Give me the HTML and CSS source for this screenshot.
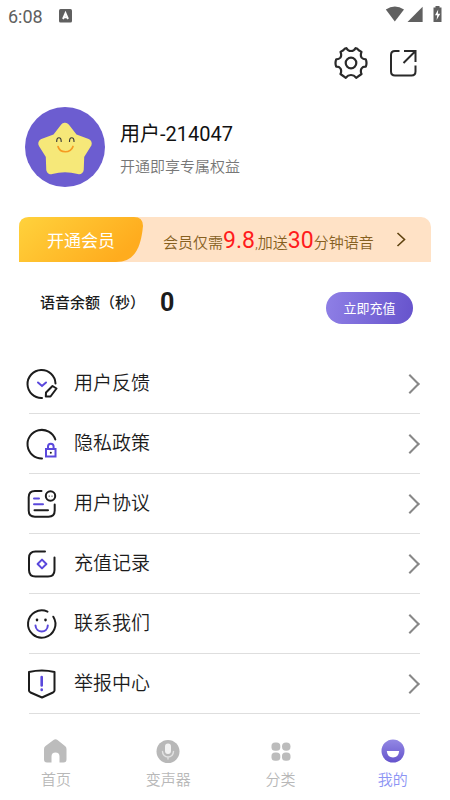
FILE: index.html
```html
<!DOCTYPE html>
<html lang="zh-CN">
<head>
<meta charset="utf-8">
<meta name="viewport" content="width=device-width, initial-scale=1">
<title>我的</title>
<link rel="stylesheet" href="styles.css">
</head>
<body>
<div class="app">
  <div class="status">
    <span class="clock">6:08</span>
    <svg class="badge-a" width="13" height="14" viewBox="0 0 13 14"><rect width="13" height="13.500" rx="1.500" fill="#606060"/><path d="M4 10 6.500 4.200 9 10M5 8.200h3" fill="none" stroke="#fff" stroke-width="1.900"/></svg>
    <svg class="signals" width="58" height="18" viewBox="0 0 58 18"><g fill="#606060"><path d="M.8 4.500Q9.800-1.500 19 4.500L9.800 16.500Z"/><path d="M37.600 1.800V17H22.500Z"/><path d="M48.500 2.500h2V1h4v1.500h2V17h-8Z"/></g><path d="M53.200 4.500 50 10.200h2.200L51.600 15l3.700-6.200h-2.400Z" fill="#fff"/></svg>
  </div>

  <div class="toolbar">
    <button class="icon-button" aria-label="设置">
      <svg width="34" height="34" viewBox="0 0 34 34" fill="none" stroke="#2a2a2a" stroke-width="2.200" stroke-linejoin="round"><circle cx="17" cy="17" r="5.300"/><path d="M9.300 4.300Q10.500 2.200 12.500 2.200Q14 5 17 5Q20 5 21.500 2.200Q23.500 2.200 24.700 4.300L27.500 5.900Q26.100 9.400 27.600 11.600Q29 13.300 31.800 13.300Q33.200 17 31.800 20.700Q28.700 20.600 27.500 22.500Q26.200 25 27.500 28L22.200 31.800Q20 29 17 29Q14 29 11.800 31.800L6.500 28Q7.800 25 6.500 22.500Q5.200 20.600 2.200 20.700Q.8 17 2.200 13.300Q5 13.300 6.400 11.600Q7.900 9.400 6.500 5.900Z"/></svg>
    </button>
    <button class="icon-button" aria-label="分享">
      <svg width="30" height="30" viewBox="0 0 30 30" fill="none" stroke="#2a2a2a" stroke-width="2"><path d="M11.500 3H7Q3 3 3 7V23.500Q3 27.500 7 27.500H23.500Q27.500 27.500 27.500 23.500V17.500M16 3H27.500V14M27.500 3 15.500 15"/></svg>
    </button>
  </div>

  <div class="profile">
    <svg class="avatar" width="80" height="80" viewBox="0 0 80 80"><circle cx="40" cy="40" r="40" fill="#6c5dd0"/><path d="M40 20.500 48.500 31.500 62 36.500 54.500 48.500 54 62.500Q40 58.500 26 62.500L25.500 48.500 18 36.500 31.500 31.500Z" fill="#f6e879" stroke="#f6e879" stroke-width="9.500" stroke-linejoin="round"/><g fill="none" stroke-linecap="round"><path d="M31.700 34.500c0-5 4.500-5 4.500 0M44.500 34.500c0-5 4.500-5 4.500 0" stroke="#3c3c38" stroke-width="1.200"/><path d="M33 39.500C35 46.500 45.500 46.500 48 39.500" stroke="#f59a22" stroke-width="1.700"/></g></svg>
    <div>
      <h1 class="name">用户-214047</h1>
      <p class="tagline">开通即享专属权益</p>
    </div>
  </div>

  <a class="banner" href="#vip">
    <span class="ribbon">
      <svg class="ribbon-shape" viewBox="0 0 124 45" preserveAspectRatio="none"><defs><linearGradient id="gold" x1="0" y1="0" x2="1" y2=".4"><stop offset="0" stop-color="#ffd23c"/><stop offset="1" stop-color="#ffac1e"/></linearGradient></defs><path d="M0 45V10Q0 0 10 0H115Q124 0 124 9C122 30 116 45 97 45Z" fill="url(#gold)"/></svg>
      <span class="ribbon-text">开通会员</span>
    </span>
    <span class="offer">会员仅需<b>9.8</b>,加送<b>30</b>分钟语音</span>
    <svg class="banner-arrow" width="10" height="16" viewBox="0 0 10 16" fill="none" stroke="#5f4310" stroke-width="1.600"><path d="M1.500 1 8.500 7.500 1.500 14"/></svg>
  </a>

  <div class="balance">
    <span class="balance-label">语音余额（秒）</span>
    <strong class="balance-value">0</strong>
    <button class="recharge">立即充值</button>
  </div>

  <ul class="menu">
    <li><a href="#feedback">
      <svg width="34" height="34" viewBox="0 0 34 34" fill="none" stroke="#1c1c1c" stroke-width="2" stroke-linecap="round"><path d="M17 31A14 14 0 1 1 30.500 16.500"/><path d="M13 15.500 17 19 21 15.500" stroke="#5a48dc"/><path d="M21 25.500 27.500 19 31.500 21.500 25.500 29.500 20.800 29.500Z" stroke-linejoin="round"/></svg>
      <span>用户反馈</span></a></li>
    <li><a href="#privacy">
      <svg width="34" height="34" viewBox="0 0 34 34" fill="none" stroke="#1c1c1c" stroke-width="2" stroke-linecap="round"><path d="M17 31.500A14.300 14.300 0 1 1 30.300 12.500"/><g stroke="#5a48dc"><rect x="21" y="22" width="9.500" height="7.500"/><path d="M23 21.500V19.500a2.800 2.800 0 0 1 5.600 0v2"/></g><path d="M25.800 25.700v.1"/></svg>
      <span>隐私政策</span></a></li>
    <li><a href="#terms">
      <svg width="34" height="34" viewBox="0 0 34 34" fill="none" stroke="#1c1c1c" stroke-width="2" stroke-linecap="round"><path d="M16.500 4H10Q3.700 4 3.700 10.300V23.500Q3.700 29.700 10 29.700H23.500Q29.700 29.700 29.700 23.500V17.500M9.500 23.200H23"/><circle cx="25.500" cy="9" r="4.700"/><path d="M24.200 9v.1M27 9v.1" stroke-width="1.200"/><path d="M9 11.500h5M9 17.300h9" stroke="#5a48dc"/></svg>
      <span>用户协议</span></a></li>
    <li><a href="#records">
      <svg width="34" height="34" viewBox="0 0 34 34" fill="none" stroke="#1c1c1c" stroke-width="2" stroke-linecap="round"><path d="M20 4.500H10.500Q4 4.500 4 11V23Q4 29.500 10.500 29.500H23Q29.500 29.500 29.500 23V10.500"/><path d="M17 12.600 21.400 17 17 21.400 12.600 17Z" stroke="#5a48dc" stroke-linejoin="round"/></svg>
      <span>充值记录</span></a></li>
    <li><a href="#contact">
      <svg width="34" height="34" viewBox="0 0 34 34" fill="none" stroke="#1c1c1c" stroke-width="2" stroke-linecap="round"><path d="M22.500 4.600A13.700 13.700 0 1 0 28.300 9.700"/><path d="M12 12.800v.3M20.500 12.800v.3" stroke-width="2.600"/><path d="M10.500 18.500C11 26.500 22.500 26.500 22.800 18.500" stroke="#5a48dc"/></svg>
      <span>联系我们</span></a></li>
    <li><a href="#report">
      <svg width="34" height="34" viewBox="0 0 34 34" fill="none" stroke="#1c1c1c" stroke-width="2" stroke-linejoin="round"><path d="M4 5Q17 2 29.500 5V23.500Q29.500 24.500 28 25.500L17 30.500 5.500 25.500Q4 24.500 4 23.500Z"/><path d="M16.700 10v8.500M16.700 22.500v.4" stroke="#5a48dc" stroke-width="2.600" stroke-linecap="round"/></svg>
      <span>举报中心</span></a></li>
  </ul>

  <nav class="tabs">
    <a href="#home">
      <svg width="26" height="26" viewBox="0 0 26 26"><path d="M1 11Q1 9 2.500 8L10.500 2Q12.500 .6 14.500 2L22 8Q23.500 9 23.500 11V21.500Q23.500 24.500 20.500 24.500H16.500V18.500a4 4 0 0 0-8 0V24.500H4Q1 24.500 1 21.500Z" fill="#bcbcbc"/></svg>
      <span>首页</span></a>
    <a href="#voice">
      <svg width="26" height="26" viewBox="0 0 26 26"><circle cx="13" cy="13.500" r="11.500" fill="#b8b8b8"/><rect x="10" y="5.500" width="6" height="10.500" rx="3" fill="#f2f2f2"/><path d="M7.500 13.500a5.500 5.500 0 0 0 11 0M13 19v2" fill="none" stroke="#e2e2e2" stroke-width="1.400" stroke-linecap="round"/></svg>
      <span>变声器</span></a>
    <a href="#category">
      <svg width="26" height="26" viewBox="0 0 26 26" fill="#bcbcbc"><rect x="3.500" y="4.500" width="8.800" height="8.300" rx="3.600"/><rect x="14" y="4.500" width="8.500" height="8.300" rx="4.100"/><rect x="3.500" y="14.500" width="8.800" height="8.300" rx="3.600"/><rect x="14" y="14.500" width="8.500" height="8.300" rx="3.600"/></svg>
      <span>分类</span></a>
    <a class="active" href="#me" aria-current="page">
      <svg width="26" height="26" viewBox="0 0 26 26"><defs><linearGradient id="violet" x1="0" y1="0" x2="0" y2="1"><stop offset="0" stop-color="#9388e4"/><stop offset="1" stop-color="#6554cc"/></linearGradient></defs><circle cx="13" cy="13" r="11.500" fill="url(#violet)"/><path d="M6.800 13H19.200Q18.500 19.500 13 19.500T6.800 13Z" fill="#fff"/></svg>
      <span>我的</span></a>
  </nav>
</div>
</body>
</html>
```
FILE: styles.css
```css
* {
  box-sizing: border-box;
}

body {
  margin: 0;
  background: #fff;
  color: #1c1c1c;
  font-family: Roboto, "Noto Sans CJK SC", sans-serif;
}

a {
  color: inherit;
  text-decoration: none;
}

button {
  padding: 0;
  border: 0;
  background: none;
  font-family: inherit;
}

svg {
  display: block;
  flex: none;
}

.app {
  display: flex;
  flex-direction: column;
  min-height: 100vh;
}

.status {
  display: flex;
  align-items: center;
  height: 32px;
  padding: 0 7px 0 8px;
}

.clock {
  color: #606060;
  font-size: 18px;
}

.badge-a {
  margin-left: 16px;
}

.signals {
  margin: -4px 0 0 auto;
}

.toolbar {
  display: flex;
  justify-content: flex-end;
  align-items: center;
  gap: 20px;
  height: 62px;
  padding-right: 32px;
}

.profile {
  display: flex;
  align-items: center;
  gap: 15px;
  margin-top: 13px;
  padding: 0 25px;
}

.name {
  margin: 4px 0 8px;
  color: #111;
  font-size: 20px;
  font-weight: 400;
  line-height: 28px;
}

.tagline {
  margin: 0;
  color: #777;
  font-size: 15px;
  font-weight: 350;
  line-height: 22px;
}

.banner {
  display: flex;
  align-items: center;
  height: 45px;
  margin: 30px 19px 0;
  border-radius: 10px 10px 0 0;
  background: #ffe2c6;
}

.ribbon {
  display: grid;
  place-items: center;
  width: 124px;
  height: 100%;
}

.ribbon-shape,
.ribbon-text {
  grid-area: 1 / 1;
}

.ribbon-shape {
  width: 100%;
  height: 100%;
}

.ribbon-text {
  color: #fff;
  font-size: 17px;
}

.offer {
  padding-top: 4px;
  margin-left: 20px;
  color: #86601f;
  font-size: 15px;
  font-weight: 350;
  line-height: 32px;
  white-space: nowrap;
}

.offer b {
  color: #ff1c1c;
  font-size: 23px;
  font-weight: 400;
}

.banner-arrow {
  margin: 0 25px 0 auto;
}

.balance {
  display: flex;
  align-items: center;
  height: 92px;
  padding: 0 37px 0 40px;
}

.balance-label {
  font-size: 15px;
  font-weight: 500;
  line-height: 22px;
}

.balance-value {
  margin-left: 15px;
  font-size: 25px;
  line-height: 30px;
}

.balance-label,
.balance-value {
  padding-bottom: 11px;
}

.recharge {
  width: 87px;
  height: 32px;
  margin-left: auto;
  padding-bottom: 2px;
  border-radius: 16px;
  background: linear-gradient(100deg, #8f80e6, #6653cc);
  color: #fff;
  font-size: 13px;
}

.menu {
  margin: 0 30px 0 24px;
  padding: 0;
  list-style: none;
}

.menu a {
  display: flex;
  align-items: center;
  gap: 15px;
  height: 59px;
  padding-left: 1px;
  font-size: 19px;
  font-weight: 350;
  line-height: 28px;
}

.menu a::after {
  content: "";
  width: 12px;
  height: 12px;
  margin: 0 3px 0 auto;
  border: solid #888;
  border-width: 2px 2px 0 0;
  transform: rotate(45deg);
}

.menu li::after {
  content: "";
  display: block;
  height: 1px;
  margin-left: 5px;
  background: #dedede;
}

.tabs {
  display: grid;
  grid-template-columns: repeat(4, 1fr);
  margin-top: auto;
  padding: 0 1px 9px 0;
}

.tabs a {
  display: flex;
  flex-direction: column;
  align-items: center;
  gap: 5px;
  color: #b8b8b8;
  font-size: 15px;
  font-weight: 350;
  line-height: 22px;
}

.tabs .active {
  color: #8c94f4;
}
```
